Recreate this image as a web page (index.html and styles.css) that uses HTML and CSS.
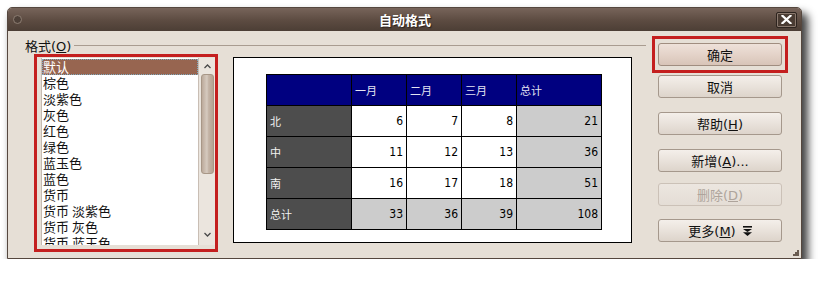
FILE: index.html
```html
<!DOCTYPE html>
<html lang="zh-CN">
<head>
<meta charset="UTF-8" />
<title>自动格式</title>
<link rel="stylesheet" href="styles.css">
</head>
<body>
  <div class="window">
    <!-- Title bar -->
    <div class="titlebar">
      <span class="title-dot"></span>
      <span class="title">自动格式</span>
      <span class="close-btn">
        <svg width="11" height="9" viewBox="0 0 11 9"><path d="M1.5 0.8 L9.5 8.2 M9.5 0.8 L1.5 8.2" stroke="#fff" stroke-width="2.2" stroke-linecap="square"/></svg>
      </span>
    </div>

    <div class="dialog">
      <div class="main">
        <div class="group-label">
          <span>格式(<u>O</u>)</span>
          <span class="group-line"></span>
        </div>

        <div class="content">
          <!-- Format list -->
          <div class="mark list-mark">
            <div class="listbox">
              <ul class="items">
                <li class="selected">默认</li>
                <li>棕色</li>
                <li>淡紫色</li>
                <li>灰色</li>
                <li>红色</li>
                <li>绿色</li>
                <li>蓝玉色</li>
                <li>蓝色</li>
                <li>货币</li>
                <li>货币 淡紫色</li>
                <li>货币 灰色</li>
                <li>货币 蓝玉色</li>
              </ul>
              <div class="scrollbar">
                <span class="arrow up"><svg width="7" height="5" viewBox="0 0 7 5"><polyline points="0.5,4 3.5,1 6.5,4" fill="none" stroke="#4a4a4a" stroke-width="1.3"/></svg></span>
                <span class="thumb"></span>
                <span class="track"></span>
                <span class="arrow down"><svg width="7" height="5" viewBox="0 0 7 5"><polyline points="0.5,1 3.5,4 6.5,1" fill="none" stroke="#4a4a4a" stroke-width="1.3"/></svg></span>
              </div>
            </div>
          </div>

          <!-- Preview -->
          <div class="preview">
            <table class="sample">
              <colgroup>
                <col class="wide"><col class="narrow"><col class="narrow"><col class="narrow"><col class="wide">
              </colgroup>
              <tr class="head">
                <td></td><td>一月</td><td>二月</td><td>三月</td><td>总计</td>
              </tr>
              <tr>
                <th>北</th><td>6</td><td>7</td><td>8</td><td class="sum">21</td>
              </tr>
              <tr>
                <th>中</th><td>11</td><td>12</td><td>13</td><td class="sum">36</td>
              </tr>
              <tr>
                <th>南</th><td>16</td><td>17</td><td>18</td><td class="sum">51</td>
              </tr>
              <tr class="total">
                <th>总计</th><td class="sum">33</td><td class="sum">36</td><td class="sum">39</td><td class="sum">108</td>
              </tr>
            </table>
          </div>
        </div>
      </div>

      <!-- Buttons -->
      <div class="buttons">
        <div class="mark ok-mark">
          <button class="btn default"><span>确定</span></button>
        </div>
        <button class="btn cancel"><span>取消</span></button>
        <button class="btn help"><span>帮助(<u>H</u>)</span></button>
        <button class="btn add"><span>新增(<u>A</u>)...</span></button>
        <button class="btn remove" disabled><span>删除(<u>D</u>)</span></button>
        <button class="btn more"><span>更多(<u>M</u>)</span>
          <svg class="more-icon" width="9" height="10" viewBox="0 0 9 10">
            <rect x="0" y="0" width="9" height="1.6" fill="#111"/>
            <polygon points="0,3 9,3 4.5,6" fill="#111"/>
            <polygon points="0,6.2 9,6.2 4.5,10" fill="#111"/>
          </svg>
        </button>
      </div>
    </div>

    <svg class="grip" width="6" height="6" viewBox="0 0 6 6">
      <rect x="4" y="0" width="2" height="2" fill="#6b5d52"/>
      <rect x="2" y="2" width="2" height="2" fill="#6b5d52"/>
      <rect x="4" y="2" width="2" height="2" fill="#6b5d52"/>
      <rect x="0" y="4" width="6" height="2" fill="#6b5d52"/>
    </svg>
  </div>
</body>
</html>
```

FILE: styles.css
```css
* {
  margin: 0;
  padding: 0;
  box-sizing: border-box;
}

html, body {
  background: #fff;
  font-family: 'DejaVu Sans', 'Noto Sans CJK SC', sans-serif;
  font-size: 13px;
  color: #111;
}

body {
  padding: 7px 0 0 7px;
}

.window {
  position: relative;
  width: 795px;
  height: 252px;
  background: #e6dfd6;
  border: 1px solid #55473e;
  border-radius: 5px 5px 0 0;
  box-shadow: 5px 7px 8px 1px rgba(0, 0, 0, 0.75);
}

/* Title bar */
.titlebar {
  height: 23px;
  display: grid;
  grid-template-columns: 1fr auto 1fr;
  align-items: center;
  background: linear-gradient(#77645a, #5c4b41 55%, #4c3e35);
  border-radius: 4px 4px 0 0;
  padding: 0 4px 0 5px;
}

.title-dot {
  width: 9px;
  height: 9px;
  border-radius: 50%;
  background: #4d4038;
  border: 1px solid #8d7d72;
}

.title {
  color: #fff;
  font-weight: bold;
  font-size: 13px;
  font-family: 'Noto Sans CJK SC', sans-serif;
  text-shadow: 1px 1px 1px #2a211c;
}

.close-btn {
  justify-self: end;
  width: 21px;
  height: 16px;
  display: flex;
  align-items: center;
  justify-content: center;
  background: #4a3c33;
  border: 1px solid #2d241f;
  box-shadow: inset 0 0 0 1px #8a796e;
  border-radius: 2px;
}

/* Dialog body */
.dialog {
  display: flex;
  height: 228px;
}

.main {
  width: 638px;
  padding: 6px 0 0 17px;
}

.group-label {
  display: flex;
  align-items: center;
  height: 16px;
  gap: 3px;
}

.group-line {
  flex: 1;
  border-top: 1px solid #a99c90;
  margin-top: 1px;
}

.content {
  display: flex;
  align-items: flex-start;
  gap: 15px;
  margin-top: 1px;
  padding-left: 9px;
}

.mark {
  border: 3px solid #c41f1f;
}

.list-mark {
  width: 184px;
  height: 198px;
  padding: 1px 0 4px 4px;
}

.listbox {
  display: flex;
  height: 100%;
  background: #fff;
  border-left: 1px solid #c6bbb1;
  overflow: hidden;
}

.items {
  list-style: none;
  flex: 1;
  font-size: 13px;
  font-family: 'Noto Sans CJK SC', sans-serif;
  padding-top: 1px;
}

.items li {
  height: 16px;
  line-height: 16px;
  padding-left: 1px;
  white-space: pre;
}

.items li.selected {
  background: #976550;
  color: #fff;
  outline: 1px dotted #7faac0;
  outline-offset: -1px;
}

.scrollbar {
  width: 17px;
  display: flex;
  flex-direction: column;
  align-items: center;
  background: #ebe5de;
  border-left: 1px solid #c9beb4;
}

.arrow {
  height: 16px;
  display: flex;
  align-items: center;
  justify-content: center;
}

.arrow.down {
  height: 22px;
}

.thumb {
  width: 13px;
  height: 100px;
  border: 1px solid #a89787;
  border-radius: 3px;
  background: linear-gradient(to right, #bcaa9b, #d6cabf 45%, #c4b4a6 60%, #b5a393);
}

.track {
  flex: 1;
}

.preview {
  width: 399px;
  height: 186px;
  margin-top: 3px;
  background: #fff;
  border: 1px solid #000;
  padding: 16px 0 0 32px;
}

.sample {
  border-collapse: collapse;
  table-layout: fixed;
  width: 336px;
  font-size: 12px;
}

.sample col.wide { width: 85px; }
.sample col.narrow { width: 55px; }

.sample tr {
  height: 31px;
}

.sample td, .sample th {
  border: 1px solid #000;
  padding: 0 3px;
  text-align: right;
  vertical-align: middle;
  font-weight: normal;
  color: #000;
  font-family: 'DejaVu Sans Condensed', 'Noto Sans CJK SC', sans-serif;
}

.sample tr.head td {
  background: #000080;
  color: #e4e4f2;
  text-align: left;
  font-size: 11px;
  font-family: 'Noto Sans CJK SC', sans-serif;
}

.sample th {
  background: #4d4d4d;
  color: #f2f2f2;
  text-align: left;
  font-size: 11px;
  font-family: 'Noto Sans CJK SC', sans-serif;
}

.sample td.sum {
  background: #cccccc;
}

/* Buttons column */
.buttons {
  display: flex;
  flex-direction: column;
  align-items: flex-start;
  padding: 5px 0 0 6px;
}

.ok-mark {
  padding: 4px 3px;
}

.btn {
  width: 124px;
  height: 23px;
  display: flex;
  align-items: center;
  justify-content: center;
  font-family: 'DejaVu Sans', 'Noto Sans CJK SC', sans-serif;
  font-size: 13px;
  color: #111;
  border: 1px solid #a5988c;
  border-radius: 3px;
  background: linear-gradient(#f4efea, #e9e2db 50%, #ddd4cb);
}

.btn.default {
  background: linear-gradient(#eee1d9, #e4d3c9 50%, #d8c4b8);
  border-color: #a08d80;
}

.btn.cancel { margin: 2px 0 0 6px; }
.btn.help { margin: 14px 0 0 6px; }
.btn.add { margin: 14px 0 0 6px; }
.btn.remove { margin: 11px 0 0 6px; }
.btn.more { margin: 13px 0 0 6px; }

.btn:disabled {
  color: #aea49b;
  border-color: #cbc1b7;
  background: linear-gradient(#ece6e0, #e4ddd5);
}

.more-icon {
  margin-left: 7px;
}

.grip {
  position: absolute;
  right: 2px;
  bottom: 2px;
}
```
